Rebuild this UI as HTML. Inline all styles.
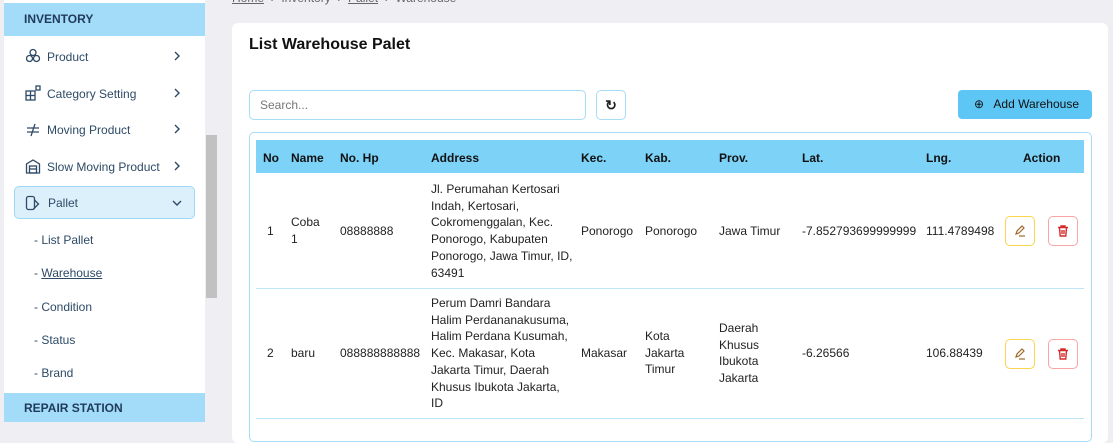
<!DOCTYPE html><html><head><style>
*{margin:0;padding:0;box-sizing:border-box}
body{width:1113px;height:431px;overflow:hidden;background:#efeff3;font-family:"Liberation Sans",sans-serif;position:relative;font-size:12px;color:#222}
.a{position:absolute}
.side{left:4px;top:0;width:201px;height:422px;background:#fff}
.hd{left:4px;width:201px;height:33px;background:#a3dcf8;color:#1f3a5a;font-weight:bold;font-size:12px;padding-left:20px;line-height:33px}
.mi{left:28px;color:#2d4a66;font-size:12px}
.sub{left:34px;color:#2d4a66;font-size:12px}
.card{left:232px;top:23px;width:876px;height:420px;background:#fff;border-radius:6px}
.t{font-size:12px;line-height:16.7px}
.th{font-weight:bold;font-size:12px;color:#111}
.btn{width:30px;height:30px;border-radius:5px;background:#fff}
</style></head><body>
<div class="a side"></div>
<div class="a hd" style="top:3px">INVENTORY</div>
<svg class="a" style="left:25px;top:48px" width="16" height="16" viewBox="0 0 16 16" fill="none" stroke="#2d4a66" stroke-width="1.3"><circle cx="8" cy="4.5" r="3"/><circle cx="4.5" cy="10.5" r="3"/><circle cx="11.5" cy="10.5" r="3"/></svg>
<div class="a mi" style="left:47px;top:50px">Product</div>
<svg class="a" style="left:173px;top:51px" width="8" height="10" viewBox="0 0 8 10" fill="none" stroke="#2d4a66" stroke-width="1.4"><path d="M2 1l4 4-4 4"/></svg>
<svg class="a" style="left:25px;top:85px" width="16" height="16" viewBox="0 0 16 16" fill="none" stroke="#2d4a66" stroke-width="1.3"><rect x="1" y="6" width="9" height="9"/><line x1="5.5" y1="6" x2="5.5" y2="15"/><line x1="1" y1="10.5" x2="10" y2="10.5"/><rect x="11" y="1" width="4" height="4"/></svg>
<div class="a mi" style="left:47px;top:87px">Category Setting</div>
<svg class="a" style="left:173px;top:88px" width="8" height="10" viewBox="0 0 8 10" fill="none" stroke="#2d4a66" stroke-width="1.4"><path d="M2 1l4 4-4 4"/></svg>
<svg class="a" style="left:25px;top:122px" width="16" height="16" viewBox="0 0 16 16" fill="none" stroke="#2d4a66" stroke-width="1.3"><path d="M2 6h12M2 10h12M10 2L6 14"/></svg>
<div class="a mi" style="left:47px;top:123px">Moving Product</div>
<svg class="a" style="left:173px;top:124px" width="8" height="10" viewBox="0 0 8 10" fill="none" stroke="#2d4a66" stroke-width="1.4"><path d="M2 1l4 4-4 4"/></svg>
<svg class="a" style="left:25px;top:158px" width="16" height="16" viewBox="0 0 16 16" fill="none" stroke="#2d4a66" stroke-width="1.3"><path d="M1.5 15V6L8 2l6.5 4v9z"/><rect x="4.5" y="8" width="7" height="7"/><line x1="4.5" y1="11" x2="11.5" y2="11"/></svg>
<div class="a mi" style="left:47px;top:160px">Slow Moving Product</div>
<svg class="a" style="left:173px;top:161px" width="8" height="10" viewBox="0 0 8 10" fill="none" stroke="#2d4a66" stroke-width="1.4"><path d="M2 1l4 4-4 4"/></svg>
<div class="a" style="left:14px;top:186px;width:181px;height:33px;background:#dcf0fb;border:1px solid #9fd8f6;border-radius:5px"></div>
<svg class="a" style="left:25px;top:195px" width="16" height="16" viewBox="0 0 16 16" fill="none" stroke="#2d4a66" stroke-width="1.3"><rect x="1.5" y="1.5" width="8" height="13" rx="2"/><path d="M9.5 5l4 4-5 5"/></svg>
<div class="a mi" style="left:48px;top:196px">Pallet</div>
<svg class="a" style="left:172px;top:199px" width="10" height="8" viewBox="0 0 10 8" fill="none" stroke="#2d4a66" stroke-width="1.4"><path d="M1 2l4 4 4-4"/></svg>
<div class="a sub" style="top:233px">- List Pallet</div>
<div class="a sub" style="top:266px">- <u>Warehouse</u></div>
<div class="a sub" style="top:300px">- Condition</div>
<div class="a sub" style="top:333px">- Status</div>
<div class="a sub" style="top:366px">- Brand</div>
<div class="a hd" style="top:393px;height:29px;line-height:31px">REPAIR STATION</div>
<div class="a" style="left:206px;top:135px;width:11px;height:163px;background:#c1c1c1"></div>
<div class="a" style="left:232px;top:-9px;color:#666;font-size:12px"><u>Home</u> &nbsp;›&nbsp; Inventory &nbsp;›&nbsp; <u>Pallet</u> &nbsp;›&nbsp; Warehouse</div>
<div class="a card"></div>
<div class="a" style="left:249px;top:36px;font-size:16px;font-weight:bold;color:#111">List Warehouse Palet</div>
<div class="a" style="left:249px;top:90px;width:337px;height:30px;border:1px solid #a6dcf6;border-radius:5px;padding:7px 10px;color:#777">Search...</div>
<div class="a" style="left:596px;top:90px;width:30px;height:30px;border:1px solid #a6dcf6;border-radius:5px;text-align:center;line-height:28px;font-size:14px;font-weight:bold">↻</div>
<div class="a" style="left:958px;top:90px;width:134px;height:29px;background:#5ec6f4;border-radius:4px;line-height:29px;padding-left:16px;color:#111">⊕ &nbsp; Add Warehouse</div>
<div class="a" style="left:249px;top:132px;width:843px;height:310px;border:1px solid #a6dcf6;border-radius:5px"></div>
<div class="a" style="left:256px;top:140px;width:828px;height:33px;background:#7dd2f8"></div>
<div class="a th" style="left:263px;top:151px">No</div>
<div class="a th" style="left:291px;top:151px">Name</div>
<div class="a th" style="left:340px;top:151px">No. Hp</div>
<div class="a th" style="left:431px;top:151px">Address</div>
<div class="a th" style="left:581px;top:151px">Kec.</div>
<div class="a th" style="left:645px;top:151px">Kab.</div>
<div class="a th" style="left:719px;top:151px">Prov.</div>
<div class="a th" style="left:802px;top:151px">Lat.</div>
<div class="a th" style="left:926px;top:151px">Lng.</div>
<div class="a th" style="left:1023px;top:151px">Action</div>
<div class="a" style="left:256px;top:288px;width:828px;height:1px;background:#bfe6f8"></div>
<div class="a" style="left:256px;top:418px;width:828px;height:1px;background:#bfe6f8"></div>
<div class="a t" style="left:267px;top:223px">1</div>
<div class="a t" style="left:291px;top:214px">Coba<br>1</div>
<div class="a t" style="left:340px;top:223px">08888888</div>
<div class="a t" style="left:431px;top:181px">Jl. Perumahan Kertosari<br>Indah, Kertosari,<br>Cokromenggalan, Kec.<br>Ponorogo, Kabupaten<br>Ponorogo, Jawa Timur, ID,<br>63491</div>
<div class="a t" style="left:581px;top:223px">Ponorogo</div>
<div class="a t" style="left:645px;top:223px">Ponorogo</div>
<div class="a t" style="left:719px;top:223px">Jawa Timur</div>
<div class="a t" style="left:802px;top:223px">-7.852793699999999</div>
<div class="a t" style="left:926px;top:223px">111.4789498</div>
<div class="a t" style="left:267px;top:345px">2</div>
<div class="a t" style="left:291px;top:345px">baru</div>
<div class="a t" style="left:340px;top:345px">088888888888</div>
<div class="a t" style="left:431px;top:295px">Perum Damri Bandara<br>Halim Perdananakusuma,<br>Halim Perdana Kusumah,<br>Kec. Makasar, Kota<br>Jakarta Timur, Daerah<br>Khusus Ibukota Jakarta,<br>ID</div>
<div class="a t" style="left:581px;top:345px">Makasar</div>
<div class="a t" style="left:645px;top:328px">Kota<br>Jakarta<br>Timur</div>
<div class="a t" style="left:719px;top:320px">Daerah<br>Khusus<br>Ibukota<br>Jakarta</div>
<div class="a t" style="left:802px;top:345px">-6.26566</div>
<div class="a t" style="left:926px;top:345px">106.88439</div>
<div class="a btn" style="left:1005px;top:216px;border:1px solid #fcd34d"></div>
<div class="a btn" style="left:1048px;top:216px;border:1px solid #f8a5a5"></div>
<div class="a btn" style="left:1005px;top:339px;border:1px solid #fcd34d"></div>
<div class="a btn" style="left:1048px;top:339px;border:1px solid #f8a5a5"></div>
<svg class="a" style="left:1013px;top:224px" width="14" height="14" viewBox="0 0 14 14" fill="none" stroke="#a0682a" stroke-width="1.2"><path d="M3 10l1-3 5-5 2 2-5 5z"/><line x1="6" y1="12" x2="12" y2="12"/></svg>
<svg class="a" style="left:1013px;top:347px" width="14" height="14" viewBox="0 0 14 14" fill="none" stroke="#a0682a" stroke-width="1.2"><path d="M3 10l1-3 5-5 2 2-5 5z"/><line x1="6" y1="12" x2="12" y2="12"/></svg>
<svg class="a" style="left:1056px;top:224px" width="14" height="14" viewBox="0 0 14 14" fill="none" stroke="#d42a2a" stroke-width="1.4"><path d="M2 3.5h10M5 3.5V2h4v1.5M3.5 3.5l.7 8.5h5.6l.7-8.5M6 6v4M8 6v4"/></svg>
<svg class="a" style="left:1056px;top:347px" width="14" height="14" viewBox="0 0 14 14" fill="none" stroke="#d42a2a" stroke-width="1.4"><path d="M2 3.5h10M5 3.5V2h4v1.5M3.5 3.5l.7 8.5h5.6l.7-8.5M6 6v4M8 6v4"/></svg>
</body></html>
